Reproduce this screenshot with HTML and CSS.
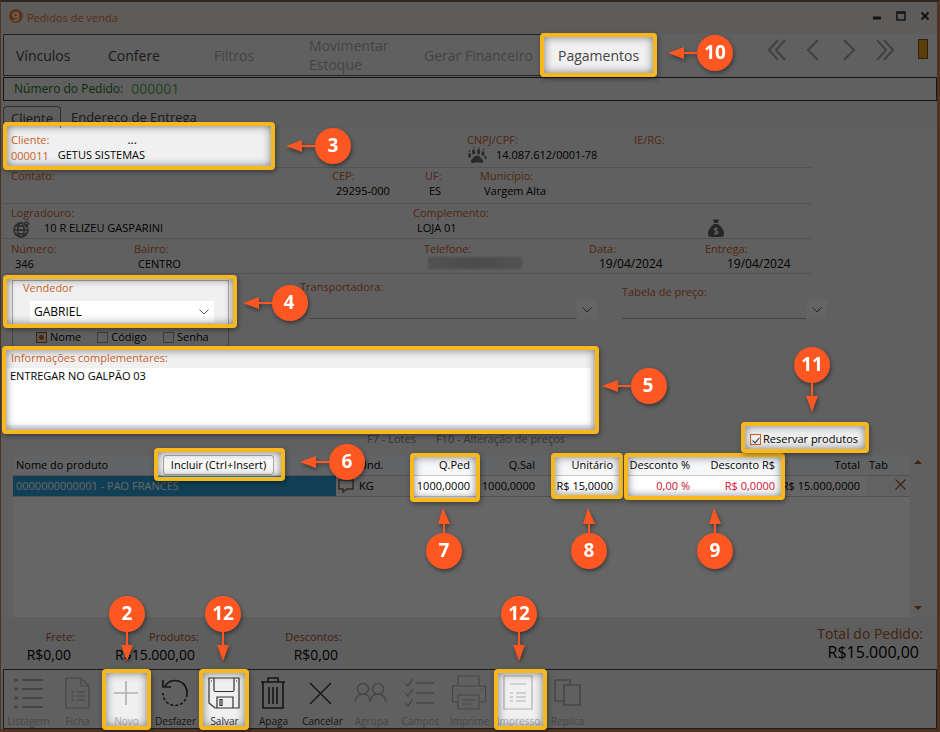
FILE: index.html
```html
<!DOCTYPE html>
<html lang="pt-BR">
<head>
<meta charset="utf-8">
<title>Pedidos de venda</title>
<link rel="stylesheet" href="styles.css">
</head>
<body>
<main class="window">
  <header class="titlebar">
    <svg class="logo" viewBox="0 0 14 14"><circle cx="7" cy="7" r="7" fill="#f08030"/><circle cx="6.500" cy="6" r="2.200" fill="none" stroke="#fff" stroke-width="1.500"/><path d="M9 3.500v6q0 2-2.500 2-1.500 0-2-.8" fill="none" stroke="#fff" stroke-width="1.400"/></svg>
    <h1>Pedidos de venda</h1>
    <div class="window-controls">
      <button aria-label="Minimizar"><svg viewBox="0 0 12 12"><path d="M2 8h8" stroke="#333" stroke-width="3"/></svg></button>
      <button aria-label="Maximizar"><svg viewBox="0 0 12 12"><path d="M2 2h8v8H2z M2 3h8" fill="none" stroke="#333" stroke-width="1.500"/></svg></button>
      <button aria-label="Fechar"><svg viewBox="0 0 12 12"><path d="M2.500 2.500l7 7m0-7l-7 7" stroke="#333" stroke-width="2.200"/></svg></button>
    </div>
  </header>

  <div class="menubar">
    <nav class="menu">
      <button>Vínculos</button>
      <button>Confere</button>
      <button class="off">Filtros</button>
      <button class="off wide">Movimentar Estoque</button>
      <button class="off">Gerar Financeiro</button>
      <button>Pagamentos</button>
    </nav>
    <div class="pager">
      <button aria-label="Primeiro"><svg viewBox="0 0 20 22"><path d="M11 1L2 11l9 10M18 1L9 11l9 10"/></svg></button>
      <button aria-label="Anterior"><svg viewBox="0 0 20 22"><path d="M15 1L5 11l10 10"/></svg></button>
      <button aria-label="Próximo"><svg viewBox="0 0 20 22"><path d="M5 1l10 10L5 21"/></svg></button>
      <button aria-label="Último"><svg viewBox="0 0 20 22"><path d="M2 1l9 10-9 10M9 1l9 10-9 10"/></svg></button>
      <span class="marker"></span>
    </div>
  </div>

  <div class="order"><span>Número do Pedido:</span><strong>000001</strong></div>

  <div class="tabs">
    <button class="tab current">Cliente</button>
    <button class="tab">Endereço de Entrega</button>
  </div>

  <section class="form">
    <div class="row row-client">
      <div class="field">
        <div class="line"><label for="cliente">Cliente:</label><button class="lookup">...</button></div>
        <div class="line"><span class="code">000011</span><input id="cliente" value="GETUS SISTEMAS"></div>
      </div>
      <div class="field">
        <label for="cnpj">CNPJ/CPF:</label>
        <div class="line">
          <svg class="glyph" viewBox="0 0 20 18"><g fill="#6a6a6a"><path d="M10 8.500c3 0 3.500 2.500 5.500 4 1.500 1.500.5 4-2 3.500-2.500-.6-4.500-.6-7 0-2.500.5-3.500-2-2-3.500 2-1.500 2.500-4 5.500-4z"/><ellipse cx="2.600" cy="8.500" rx="1.500" ry="2.400"/><ellipse cx="6.600" cy="5" rx="1.600" ry="2.800"/><ellipse cx="11.600" cy="4.500" rx="1.600" ry="2.800"/><ellipse cx="16" cy="6.500" rx="1.500" ry="2.600"/><ellipse cx="18.500" cy="10.500" rx="1.100" ry="1.800"/></g><path d="M2.500 5V3M6.800 2V.3M12 1.500V0M16.800 3.500V1.500" stroke="#6a6a6a"/></svg>
          <input id="cnpj" value="14.087.612/0001-78">
        </div>
      </div>
      <div class="field"><label for="ie">IE/RG:</label><input id="ie"></div>
    </div>
    <div class="row row-contact">
      <div class="field"><label for="contato">Contato:</label><input id="contato"></div>
      <div class="field"><label for="cep">CEP:</label><input id="cep" value="29295-000"></div>
      <div class="field"><label for="uf">UF:</label><input id="uf" value="ES"></div>
      <div class="field"><label for="municipio">Município:</label><input id="municipio" value="Vargem Alta"></div>
    </div>
    <div class="row row-street">
      <div class="field">
        <label for="rua">Logradouro:</label>
        <div class="line">
          <svg class="glyph" viewBox="0 0 20 18"><g fill="none" stroke="#6a6a6a" stroke-width="1.500"><circle cx="10" cy="10" r="7"/><ellipse cx="10" cy="10" rx="3.200" ry="7"/><path d="M3 10h14M4.500 6h10M4.500 14h11"/></g><path d="M15.500 9l-3-5a3 3 0 1 1 6 0z" fill="#6a6a6a" stroke="#eee" stroke-width=".7"/><circle cx="15.500" cy="3.600" r="1" fill="#eee"/></svg>
          <input id="rua" value="10 R ELIZEU GASPARINI">
        </div>
      </div>
      <div class="field"><label for="compl">Complemento:</label><input id="compl" value="LOJA 01"></div>
      <svg class="bag" viewBox="0 0 18 20"><path d="M5.500 1l2 1L9 1l1.500 1 2-1-1.800 4H7.300zM7 6h4c3 2.500 6 5.500 6 9.500 0 2.500-1 3.500-3 3.500H4c-2 0-3-1-3-3.500C1 11.500 4 8.500 7 6z" fill="#606060"/><path d="M11 10.800c-1-.8-3.700-.8-3.700.7S11 13 11 14.500s-3 1.600-4 .6M9 9.300v7.400" fill="none" stroke="#eee" stroke-width="1.200"/></svg>
    </div>
    <div class="row row-place">
      <div class="field"><label for="numero">Número:</label><input id="numero" value="346"></div>
      <div class="field"><label for="bairro">Bairro:</label><input id="bairro" value="CENTRO"></div>
      <div class="field"><label for="fone">Telefone:</label><input id="fone" class="redacted"></div>
      <div class="field date"><label for="data">Data:</label><input id="data" value="19/04/2024"></div>
      <div class="field delivery"><label for="entrega">Entrega:</label><input id="entrega" value="19/04/2024"></div>
    </div>

    <div class="sales">
      <div class="seller">
        <label for="vendedor">Vendedor</label>
        <div class="picker filled">
          <select id="vendedor"><option>GABRIEL</option></select>
          <svg viewBox="0 0 20 20"><path d="M5.500 7.500L10 12l4.500-4.500"/></svg>
        </div>
        <div class="radios">
          <label><input type="radio" name="busca" checked>Nome</label>
          <label><input type="radio" name="busca">Código</label>
          <label><input type="radio" name="busca">Senha</label>
        </div>
      </div>
      <div class="choice carrier">
        <label for="transp">Transportadora:</label>
        <div class="picker"><select id="transp"><option></option></select><svg viewBox="0 0 20 20"><path d="M5.500 8.500L10 13l4.500-4.500"/></svg></div>
      </div>
      <div class="choice prices">
        <label for="tabela">Tabela de preço:</label>
        <div class="picker"><select id="tabela"><option></option></select><svg viewBox="0 0 20 20"><path d="M5.500 8.500L10 13l4.500-4.500"/></svg></div>
      </div>
    </div>

    <div class="notes">
      <label for="info">Informações complementares:</label>
      <textarea id="info">ENTREGAR NO GALPÃO 03</textarea>
    </div>

    <div class="hints">
      <span>F7 - Lotes</span>
      <span>F10 - Alteração de preços</span>
      <label class="reserve"><input type="checkbox" checked>Reservar produtos</label>
    </div>
  </section>

  <section class="items">
    <div class="grid">
      <table>
        <colgroup><col><col class="c-note"><col class="c-unit"><col class="c-qty"><col class="c-qty"><col class="c-price"><col class="c-pct"><col class="c-money"><col class="c-money"><col class="c-tab"><col class="c-del"></colgroup>
        <thead>
          <tr>
            <th><div class="name-head">Nome do produto<button class="include">Incluir (Ctrl+Insert)</button></div></th>
            <th></th><th class="und">Und.</th><th class="num">Q.Ped</th><th class="num">Q.Sal</th><th class="num">Unitário</th><th class="num">Desconto %</th><th class="num">Desconto R$</th><th class="num">Total</th><th>Tab</th><th></th>
          </tr>
        </thead>
        <tbody>
          <tr>
            <td class="selected">0000000000001 - PAO FRANCES</td>
            <td class="icon"><svg class="note" viewBox="0 0 16 14"><path d="M1 1h14v9H9l-4 3v-3H1z" fill="none" stroke="#8a5a40" stroke-width="1.400"/></svg></td>
            <td class="und">KG</td><td class="num">1000,0000</td><td class="num">1000,0000</td><td class="num">R$ 15,0000</td><td class="num red">0,00 %</td><td class="num red">R$ 0,0000</td><td class="num">R$ 15.000,0000</td><td></td>
            <td class="icon del"><button aria-label="Remover item"><svg class="remove" viewBox="0 0 11 11"><path d="M.5.5l10 10m0-10l-10 10" stroke="#a0562c" stroke-width="1.200"/></svg></button></td>
          </tr>
        </tbody>
      </table>
    </div>
    <div class="scroll">
      <svg viewBox="0 0 8 4"><path d="M0 4l4-4 4 4z"/></svg>
      <svg viewBox="0 0 8 4"><path d="M0 0l4 4 4-4z"/></svg>
    </div>
  </section>

  <section class="totals">
    <div class="total freight"><span>Frete:</span><b>R$0,00</b></div>
    <div class="total products"><span>Produtos:</span><b>R$15.000,00</b></div>
    <div class="total discounts"><span>Descontos:</span><b>R$0,00</b></div>
    <div class="total grand"><span>Total do Pedido:</span><b>R$15.000,00</b></div>
  </section>

  <nav class="toolbar">
    <button class="off"><svg viewBox="0 0 36 36"><path d="M11 5h21M11 14h21M11 23h21M11 32h21" stroke-width="2"/><path d="M3 5h4M3 14h4M3 23h4M3 32h4" stroke-width="3"/></svg>Listagem</button>
    <button class="off"><svg viewBox="0 0 36 36"><path d="M6 3h15l8 8v22H6zM21 3v8h8M11 17h3M17 17h8M11 21h3M17 21h8M11 25h3M17 25h8"/></svg>Ficha</button>
    <button class="off"><svg viewBox="0 0 36 36"><path d="M17 6v24M5 18h24" stroke-width="1.600"/></svg>Novo</button>
    <button><svg viewBox="0 0 36 36"><path d="M7 11A12 12 0 0 1 29 19M5 5v7h8" stroke-width="1.600"/><path d="M29 19a12 12 0 0 1-24-1" stroke-width="1.600" stroke-dasharray="3 2"/></svg>Desfazer</button>
    <button><svg viewBox="0 0 36 36"><path d="M2 3h30v30H8l-6-5zM7 3v12q0 1.500 1.500 1.500h17q1.500 0 1.500-1.500V3M10 33V22h16v11M13 24.500h2v6h-2zM4 6h1M29 6h1"/></svg>Salvar</button>
    <button><svg viewBox="0 0 36 36"><path d="M5 7h24M7 7v26h20V7M12 7V3h10v4M13 12v17M17 12v17M21 12v17" stroke-width="1.600"/></svg>Apaga</button>
    <button><svg viewBox="0 0 36 36"><path d="M5 8l21 21M26 8L5 29" stroke-width="1.400"/></svg>Cancelar</button>
    <button class="off"><svg viewBox="0 0 36 36"><path d="M1 27c0-5 4-8 8-8s7 3 7 8M16 27c0-5 4-8 8-8s8 3 8 8" stroke-width="1.500"/><circle cx="9" cy="14" r="5.500" stroke-width="1.500"/><circle cx="24" cy="14" r="5.500" stroke-width="1.500"/></svg>Agrupa</button>
    <button class="off"><svg viewBox="0 0 36 36"><path d="M13 8h18M13 18h18M13 28h18M2 8l3 3 5-7M2 18l3 3 5-7M2 28l3 3 5-7" stroke-width="1.400"/></svg>Campos</button>
    <button class="off"><svg viewBox="0 0 36 36"><path d="M6 11V1h21v10M6 27H0.600V11h33v16h-6M6 20h21v14H6zM10 25h13M10 29h9M28 15h2"/></svg>Imprime</button>
    <button class="off"><svg viewBox="0 0 36 36"><path d="M3 1h28v33H3zM9 9h16M9 18h3M15 18h10M9 22h3M15 22h10M9 26h3M15 26h10"/></svg>Impresso</button>
    <button class="off"><svg viewBox="0 0 36 36"><path d="M13 26H5V5h15v4M14 10h16v20H14z" stroke-width="1.600"/></svg>Replica</button>
  </nav>
</main>

<svg class="dim" aria-hidden="true">
  <mask id="spots">
    <rect width="100%" height="100%" fill="#fff"/>
    <g fill="#000">
      <rect x="542" y="35" width="112" height="40"/><rect x="5" y="124" width="268" height="43"/><rect x="5" y="277" width="229" height="49"/><rect x="4" y="348" width="592" height="83"/>
      <rect x="156" y="450" width="127" height="29"/><rect x="412" y="455" width="66" height="45"/><rect x="553" y="455" width="68" height="42"/><rect x="626" y="455" width="157" height="43"/>
      <rect x="743" y="425" width="124" height="26"/><rect x="104" y="671" width="45" height="57"/><rect x="201" y="671" width="46" height="57"/><rect x="496" y="671" width="49" height="57"/>
    </g>
  </mask>
  <rect width="100%" height="100%" mask="url(#spots)"/>
</svg>
<div class="spot s-pay"></div><div class="spot s-client"></div><div class="spot s-seller"></div><div class="spot s-notes"></div>
<div class="spot s-include"></div><div class="spot s-qty"></div><div class="spot s-price"></div><div class="spot s-discount"></div>
<div class="spot s-reserve"></div><div class="spot s-new"></div><div class="spot s-save"></div><div class="spot s-print"></div>

<svg class="steps" viewBox="0 0 940 732" width="940" height="732">
  <defs>
    <g id="left"><path d="M-18 0h-17" class="stem"/><path d="M-47 0l16-6v12z"/><circle r="18"/></g>
    <g id="down"><path d="M0 18v14" class="stem"/><path d="M0 47l-6-16h12z"/><circle r="18"/></g>
    <g id="up"><path d="M0-18v-12" class="stem"/><path d="M-1-43l-5 16h12z"/><circle r="18"/></g>
  </defs>
  <g class="marks">
    <use href="#left" x="715" y="53"/><use href="#left" x="333" y="146"/><use href="#left" x="290" y="303"/><use href="#left" x="649" y="386"/><use href="#left" x="347" y="462"/>
    <use href="#down" x="812" y="365"/><use href="#up" x="444" y="551"/><use href="#up" x="589" y="551"/><use href="#up" x="715" y="551"/>
    <use href="#down" x="127" y="614"/><use href="#down" x="223" y="614"/><use href="#down" x="519" y="614"/>
  </g>
  <g class="digits">
    <text x="715" y="59">10</text><text x="333" y="152">3</text><text x="289" y="309">4</text><text x="648" y="392">5</text><text x="347" y="468">6</text><text x="812" y="371">11</text>
    <text x="444" y="557">7</text><text x="589" y="557">8</text><text x="715" y="557">9</text><text x="127" y="620">2</text><text x="223" y="620">12</text><text x="519" y="620">12</text>
  </g>
</svg>
</body>
</html>
```
FILE: styles.css
```css
* { box-sizing: border-box; }

body {
  margin: 0;
  position: relative;
  background: #f0f0f0;
  color: #000;
  font: 12px/16px "Open Sans", "Noto Sans", sans-serif;
}

button, input, select, textarea {
  margin: 0;
  padding: 0;
  border: 0;
  background: none;
  color: inherit;
  font: inherit;
}

svg { display: block; flex: none; }

.window {
  display: flex;
  flex-direction: column;
  min-height: 100vh;
  border: solid #c08050;
  border-width: 2px 3px 3px 1px;
  border-top-color: #806050;
  padding: 0 0 0 2px;
  background: #eaeaea;
}

.titlebar {
  display: flex;
  align-items: center;
  height: 32px;
  padding: 0 6px 4px 6px;
  background: #e8e5e4;
}
.logo { width: 14px; height: 14px; margin-right: 4px; }
h1 {
  margin: 0;
  padding-top: 3px;
  color: #e07030;
  font-size: 11px;
  font-weight: 400;
}
.window-controls { display: flex; gap: 12px; margin-left: auto; }
.window-controls svg { width: 12px; height: 12px; }

.menubar { display: flex; justify-content: space-between; height: 42px; background: #f0f0f0; }
.menu {
  display: grid;
  grid-template-columns: 92px 106px 95px 115px 134px 1fr;
  align-items: center;
  width: 652px;
  border: 1px solid #555;
  padding-left: 12px;
  color: #444;
  font-size: 14px;
  line-height: 19px;
}
.menu button { text-align: left; white-space: nowrap; }
.menu .wide { white-space: normal; width: 90px; }
.menu .off { color: #aaa; }
.pager { display: flex; gap: 16px; padding: 5px 9px 0 0; }
.pager button { height: 22px; }
.pager svg { width: 20px; height: 22px; fill: none; stroke: #a0a0a0; stroke-width: 2; }
.marker { width: 10px; height: 20px; margin-left: 7px; border: 1px solid #805020; background: #e79a20; }

.order {
  display: flex;
  align-items: center;
  gap: 8px;
  height: 24px;
  margin-top: 1px;
  border: 1px solid #333;
  padding-left: 10px;
  background: #f0f0f0;
  color: #1a7020;
}
.order strong { color: #4fae4f; font-size: 14px; font-weight: 400; }

.tabs { display: flex; height: 27px; padding-top: 5px; color: #444; font-size: 13px; }
.tab { padding: 0 10px; }
.tab.current { border: 1px solid #777; border-bottom: 0; border-radius: 4px 4px 0 0; padding: 0 7px; }

.form { padding-top: 5px; background: #f0f0f0; }
label { color: #c8622a; }
.row {
  display: grid;
  width: 809px;
  height: 35px;
  border-bottom: 1px solid #d0d0d0;
  padding-left: 8px;
}
.row label, .choice > label, .notes label, .seller > label { font-size: 11px; line-height: 14px; }
.field { min-width: 0; font-size: 11px; }
.field > label { display: block; }
.field input { display: block; width: 100%; height: 16px; padding-left: 4px; }
.line { display: flex; }
.line .glyph { width: 20px; height: 18px; }
.line input { flex: 1; min-width: 0; padding-left: 9px; }
.line label { flex: none; line-height: 14px; }
.lookup { height: 14px; margin-left: 78px; font-size: 12px; line-height: 14px; }
.code { color: #c8622a; line-height: 18px; }
.row-client { grid-template-columns: 456px 167px 1fr; }
.row-contact { grid-template-columns: 321px 93px 55px 1fr; height: 36px; padding-top: 1px; }
.row-street { grid-template-columns: 402px 294px 1fr; padding-top: 2px; }
.row-street .line input { padding-left: 13px; }
.bag { width: 18px; height: 20px; margin-top: 12px; }
.row-place { grid-template-columns: 123px 290px 165px 116px 1fr; padding-top: 3px; }
.field .redacted { width: 94px; height: 12px; margin: 1px 0 0 4px; background: linear-gradient(90deg, #ccc, #bbb, #ccc); filter: blur(1px); }
.date input, .delivery input { font-size: 12px; }
.field.date input { padding-left: 10px; }
.field.delivery input { padding-left: 22px; }

.sales { display: flex; padding: 6px 0 0 9px; }
.seller { width: 217px; height: 70px; border: 1px solid #aaa; border-bottom: 0; padding: 0 14px 0 10px; }
.seller > label { display: block; }
.picker { display: flex; align-items: center; }
.picker select { flex: 1; min-width: 0; height: 20px; appearance: none; }
.picker svg { width: 20px; height: 20px; margin-left: -20px; fill: none; stroke: #555; pointer-events: none; }
.picker.filled { height: 22px; margin: 6px 0 0 7px; background: #fff; }
.picker.filled select { padding-left: 4px; }
.radios { display: flex; gap: 16px; padding: 6px 0 0 13px; font-size: 11px; }
.radios label { display: flex; align-items: center; gap: 3px; color: #000; }
.radios input { appearance: none; width: 11px; height: 11px; border: 1px solid #999; }
.radios input:checked { border-color: #a05828; background: radial-gradient(circle, #c06020 0 2px, #e8d8d0 3px); }
.choice > label { display: block; }
.choice .picker { margin-top: 5px; }
.choice select { border-bottom: 1px solid #aaa; }
.choice .picker svg { margin-left: 1px; background: #fafafa; }
.carrier { width: 297px; margin-left: 71px; }
.prices { width: 205px; margin-left: 25px; padding-top: 5px; }
.prices .picker { margin-top: 0; }
.carrier .picker { margin-left: 9px; }

.notes { width: 588px; padding: 0 0 2px 4px; }
.notes label { display: block; height: 18px; padding: 1px 0 0 4px; }
.notes textarea { display: block; width: 100%; height: 57px; padding-left: 3px; background: #fff; font-size: 11px; resize: none; }

.hints { display: flex; align-items: flex-start; height: 28px; padding: 4px 0 0 364px; color: #888; font-size: 11px; }
.hints span + span { margin-left: 20px; }
.reserve { display: flex; align-items: center; gap: 2px; margin-left: auto; padding-right: 79px; color: #000; }
.reserve input { display: grid; place-items: center; width: 11px; height: 11px; border: 1px solid #c8622a; appearance: none; }
.reserve input::after { content: ""; width: 3px; height: 6px; border: solid #234; border-width: 0 1px 1px 0; transform: rotate(40deg); }

.items { display: flex; flex: 1; padding-left: 10px; background: #f0f0f0; }
.grid { flex: 1; min-height: 160px; background: #fff; }
table { width: 100%; border-collapse: collapse; table-layout: fixed; font-size: 11px; }
th { height: 20px; padding: 0 3px; border-bottom: 1px solid #ccc; background: #f6f7f9; font-weight: 400; text-align: left; white-space: nowrap; }
td { height: 21px; padding: 0 3px; border-bottom: 1px solid #ccc; background: #f6f6f6; white-space: nowrap; }
th.num, td.num { padding: 0 6px 0 0; text-align: right; }
td.num { background: #fff; }
td.red { color: #d01030; }
td.selected { background: #2a9fd6; color: #fff; }
td.icon { padding: 0 2px; }
td.del { padding-left: 5px; }
.c-note, .c-del { width: 20px; }
.c-unit { width: 55px; }
.c-qty { width: 65px; }
.c-price { width: 78px; }
.c-pct { width: 77px; }
.c-money { width: 85px; }
.c-tab { width: 24px; }
.note { width: 16px; height: 14px; }
.remove { width: 11px; height: 11px; }
.name-head { display: flex; align-items: center; justify-content: space-between; }
.include { width: 111px; height: 20px; margin-right: 59px; border: 1px solid #aaa; border-radius: 3px; background: #f8f8f8; }
.scroll { display: flex; flex-direction: column; justify-content: space-between; width: 27px; padding: 5px 15px 7px 4px; }
.scroll svg { width: 8px; height: 4px; fill: #b05a20; }

.totals { display: flex; height: 52px; padding: 11px 14px 0 0; }
.total { display: flex; flex-direction: column; text-align: right; }
.total span { color: #a8552a; font-size: 11px; line-height: 18px; }
.total b { padding-right: 4px; font-size: 14px; font-weight: 400; line-height: 18px; }
.freight { width: 72px; }
.products { width: 124px; }
.discounts { width: 143px; }
.total.grand { margin: -3px 0 0 auto; }
.grand span { font-size: 14px; }
.grand b { font-size: 16px; }

.toolbar { display: flex; height: 60px; border: 1px solid #444; background: #f0f0f0; }
.toolbar button {
  display: flex;
  flex-direction: column;
  align-items: center;
  width: 49px;
  padding-top: 5px;
  color: #333;
  font-size: 10px;
  line-height: 14px;
}
.toolbar svg { width: 36px; height: 36px; margin-bottom: 3px; fill: none; stroke: currentColor; stroke-width: 1.2; }
.toolbar .off { color: #b0b0b0; }

.dim, .steps { position: absolute; top: 0; left: 0; pointer-events: none; }
.dim { width: 100%; height: 100%; fill: rgb(0 0 0 / 60%); }

.spot {
  position: absolute;
  border: 4px solid #f6b81e;
  border-radius: 4px;
  box-shadow: inset 0 0 8px rgb(0 0 0 / 50%), 1px 2px 5px rgb(0 0 0 / 40%);
  pointer-events: none;
}
.s-pay { left: 540px; top: 33px; width: 117px; height: 44px; }
.s-client { left: 3px; top: 122px; width: 272px; height: 48px; }
.s-seller { left: 3px; top: 275px; width: 234px; height: 53px; }
.s-notes { left: 2px; top: 346px; width: 597px; height: 88px; }
.s-include { left: 154px; top: 448px; width: 131px; height: 33px; }
.s-qty { left: 410px; top: 453px; width: 70px; height: 49px; }
.s-price { left: 551px; top: 453px; width: 72px; height: 46px; }
.s-discount { left: 624px; top: 453px; width: 161px; height: 47px; }
.s-reserve { left: 741px; top: 422px; width: 128px; height: 31px; }
.s-new { left: 102px; top: 669px; width: 49px; height: 61px; }
.s-save { left: 199px; top: 669px; width: 50px; height: 61px; }
.s-print { left: 494px; top: 669px; width: 53px; height: 61px; }

.marks { fill: #ff5722; filter: drop-shadow(1px 2px 2px rgb(0 0 0 / 45%)); }
.stem { fill: none; stroke: #ff5722; stroke-width: 2; }
.digits { fill: #fff; font-size: 19px; font-weight: 700; text-anchor: middle; }
```
